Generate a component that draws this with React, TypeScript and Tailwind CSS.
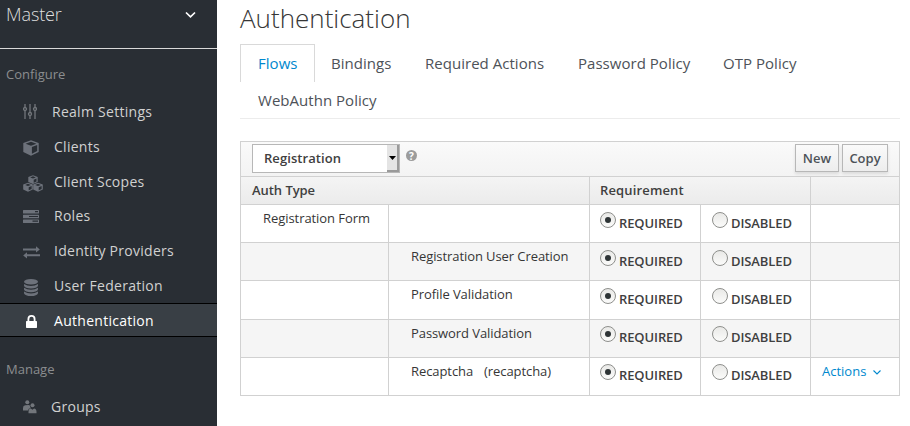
import React from "react";

type IconProps = { className?: string };

const SlidersIcon = ({ className }: IconProps) => (
  <svg className={className} width="14" height="15" viewBox="0 0 14 15" fill="none" stroke="currentColor" strokeWidth="1.3">
    <path d="M2 0v3M2 7v8M7 0v8M7 12v3M12 0v3M12 7v8" />
    <circle cx="2" cy="5" r="1.5" />
    <circle cx="7" cy="10" r="1.5" />
    <circle cx="12" cy="5" r="1.5" />
  </svg>
);

const CubeIcon = ({ className }: IconProps) => (
  <svg className={className} width="16" height="16" viewBox="0 0 16 16" fill="currentColor">
    <path fillRule="evenodd" d="M8 0.3L15.7 3.1V12L8 15.7L0.3 12V3.1ZM8 1.8L2.6 3.8L8 5.8L13.4 3.8ZM8.9 7.1V13.7L14.2 11.1V5.1Z" />
  </svg>
);

const CubesIcon = ({ className }: IconProps) => (
  <svg className={className} width="20" height="17" viewBox="0 0 20 17" fill="currentColor">
    <path fillRule="evenodd" d="M10 0.2L14.7 2V6.9L10 9.1L5.3 6.9V2ZM10 1.3L7.2 2.4L10 3.5L12.8 2.4ZM10.7 4.7V7.7L13.5 6.4V3.6Z" />
    <path fillRule="evenodd" d="M5 7.7L9.8 9.5V14.5L5 16.8L0.2 14.5V9.5ZM5 8.8L2.2 9.9L5 11L7.8 9.9ZM5.7 12.2V15.3L8.6 13.9V11.1Z" />
    <path fillRule="evenodd" d="M15 7.7L19.8 9.5V14.5L15 16.8L10.2 14.5V9.5ZM15 8.8L12.2 9.9L15 11L17.8 9.9ZM15.7 12.2V15.3L18.6 13.9V11.1Z" />
  </svg>
);

const TasksIcon = ({ className }: IconProps) => (
  <svg className={className} width="16" height="13" viewBox="0 0 16 13" fill="currentColor">
    <path fillRule="evenodd" d="M.5 0h15q.5 0 .5.5v2.500q0 .5-.5.5h-15Q0 3.500 0 3V.5Q0 0 .5 0ZM12 1v1.300h3V1ZM.5 4.800h15q.5 0 .5.5v2.500q0 .5-.5.5h-15Q0 8.300 0 7.800V5.300q0-.5.5-.5ZM6 5.900v1.200h9V5.900ZM.5 9.500h15q.5 0 .5.5v2.500q0 .5-.5.5h-15Q0 13 0 12.500V10q0-.5.5-.5ZM9.500 10.600v1.200H15v-1.200Z" />
  </svg>
);

const ExchangeIcon = ({ className }: IconProps) => (
  <svg className={className} width="17" height="13" viewBox="0 0 17 13" fill="currentColor">
    <path d="M0 2.400h13V.3L16.800 3.500L13 6.500V4.400H0ZM17 8.300H4V6.300L.2 9.500L4 12.600v-2.300h13Z" />
  </svg>
);

const DatabaseIcon = ({ className }: IconProps) => (
  <svg className={className} width="14" height="17" viewBox="0 0 14 17" fill="currentColor">
    <ellipse cx="7" cy="2.800" rx="7" ry="2.800" />
    <path d="M0 5q3 2 7 2t7-2v1.800Q13 9.500 7 9.500T0 6.800ZM0 8.700q3 2 7 2t7-2v1.800q-1 2.700-7 2.700T0 10.500ZM0 12.400q3 2 7 2t7-2v1.800Q13 17 7 17T0 14.200Z" />
  </svg>
);

const LockIcon = ({ className }: IconProps) => (
  <svg className={className} width="11" height="13" viewBox="0 0 11 13" fill="currentColor">
    <path fillRule="evenodd" d="M1.500 6V4a4 4 0 0 1 8 0v2h.8q.7 0 .7.700v5.600q0 .7-.7.700H.7q-.7 0-.7-.7V6.700Q0 6 .7 6ZM3.300 6h4.400V4a2.200 2.200 0 0 0-4.400 0Z" />
  </svg>
);

const GroupIcon = ({ className }: IconProps) => (
  <svg className={className} width="14" height="14" viewBox="0 0 14 14" fill="currentColor">
    <circle cx="4.300" cy="2.200" r="2" />
    <circle cx="9.500" cy="5.300" r="2" />
    <path d="M0 10.500V8q0-2.500 2.300-2.800L5.600 5q1 0 1.500.9Q7 7.300 7.800 8Q5.300 8.300 5 10.500ZM5.500 13.300v-1.500q0-3 2.300-3.300l1.700 1.200L11 8.500q2.500.3 2.500 3.300v1.500Z" />
  </svg>
);

type NavItem = {
  label: string;
  icon: (p: IconProps) => React.ReactElement;
  row: string;
  iconClass: string;
  textClass: string;
};

const configure: NavItem[] = [
  { label: "Realm Settings", icon: SlidersIcon, row: "h-[35px]", iconClass: "text-[#72767b] -mt-px", textClass: "pl-[52px]" },
  { label: "Clients", icon: CubeIcon, row: "h-[35px]", iconClass: "text-[#6d727b] mt-[3px]", textClass: "pl-[54px]" },
  { label: "Client Scopes", icon: CubesIcon, row: "h-[35px]", iconClass: "text-[#6d727b] mt-[3px]", textClass: "pl-[54px]" },
  { label: "Roles", icon: TasksIcon, row: "h-[34px]", iconClass: "text-[#6d727b] mt-[1px]", textClass: "pl-[54px]" },
  { label: "Identity Providers", icon: ExchangeIcon, row: "h-[35px]", iconClass: "text-[#6d727b] mt-[4px]", textClass: "pl-[54px]" },
  { label: "User Federation", icon: DatabaseIcon, row: "h-[35px]", iconClass: "text-[#6d727b] mt-[3px] ml-px", textClass: "pl-[54px]" },
  { label: "Authentication", icon: LockIcon, row: "h-[34px] border-y border-black bg-[#393f45]", iconClass: "text-white mt-[3px] ml-[3px]", textClass: "pl-[54px] pt-[2px]" },
];

const manage: NavItem[] = [
  { label: "Groups", icon: GroupIcon, row: "h-[35px]", iconClass: "text-[#72767b]", textClass: "pl-[51px]" },
];

function NavRow({ item }: { item: NavItem }) {
  const Icon = item.icon;
  return (
    <a className={`grid items-center ${item.row}`}>
      <span className="col-start-1 row-start-1 pl-[23px]">
        <Icon className={`block ${item.iconClass}`} />
      </span>
      <span
        className={`col-start-1 row-start-1 whitespace-nowrap text-[14px] leading-5 tracking-[0.28px] ${item.textClass} ${
          item.label === "Authentication" ? "text-white" : "text-[#d1d1d1]"
        }`}
      >
        {item.label}
      </span>
    </a>
  );
}

function Sidebar() {
  return (
    <aside className="h-full w-[217px] shrink-0 overflow-hidden bg-[#292e34]">
      <div className="flex h-[49px] justify-between border-b border-[#d9d9d9] pl-[6px] pr-[21px] pt-[2px] text-[#dedede]">
        <span className="text-[18px] font-light leading-6 tracking-[-0.1px]">Master</span>
        <svg className="mt-[9px]" width="11" height="8" viewBox="0 0 11 8" fill="none" stroke="white" strokeWidth="1.700">
          <path d="M1 1.500l4.500 4.300L10 1.500" />
        </svg>
      </div>
      <h2 className="h-[45px] pl-[6px] pt-[15px] text-[13px] leading-5 text-[#8b8d8f]">Configure</h2>
      <nav>
        {configure.map((i) => (
          <NavRow key={i.label} item={i} />
        ))}
      </nav>
      <h2 className="h-[52px] pl-[6px] pt-[22px] text-[13px] leading-5 text-[#8b8d8f]">Manage</h2>
      <nav>
        {manage.map((i) => (
          <NavRow key={i.label} item={i} />
        ))}
      </nav>
    </aside>
  );
}

const tabs = [
  { label: "Bindings", width: "w-[94px]" },
  { label: "Required Actions", width: "w-[153px]" },
  { label: "Password Policy", width: "w-[145px]" },
  { label: "OTP Policy", width: "w-[107px]" },
];

function Tabs() {
  return (
    <div className="h-[75px] w-[660px] border-b border-[#ececec] text-[15px] leading-5 tracking-[0.03px] text-[#4d5258]">
      <div className="flex h-[38px] whitespace-nowrap">
        <a className="w-[75px] border border-b-0 border-[#d9d9d9] pl-[17px] pt-[8px] text-[#0088ce]">Flows</a>
        {tabs.map((t) => (
          <a key={t.label} className={`pl-[16px] pt-[9px] ${t.width}`}>
            {t.label}
          </a>
        ))}
      </div>
      <a className="block pl-[18px] pt-[8px]">WebAuthn Policy</a>
    </div>
  );
}

function Radio({ label, checked = false }: { label: string; checked?: boolean }) {
  return (
    <label className="flex gap-[3px] whitespace-nowrap">
      <span className="flex size-[16px] shrink-0 items-center justify-center rounded-full border border-[#8e8f8c] bg-linear-to-b from-[#e9e9e7] to-[#fbfbfa]">
        {checked && <span className="size-[6px] rounded-full bg-[#2e3436]" />}
      </span>
      <span className="pt-px text-[13px] font-semibold leading-5 tracking-[-0.1px] text-[#404040]">{label}</span>
    </label>
  );
}

type Flow = { first?: string; second?: string; provider?: string; height: string; tone: string; radioPad: string };

const flows: Flow[] = [
  { first: "Registration Form", height: "h-[38px]", tone: "bg-white", radioPad: "pt-[7px]" },
  { second: "Registration User Creation", height: "h-[38px]", tone: "bg-[#f5f5f5]", radioPad: "pt-[7px]" },
  { second: "Profile Validation", height: "h-[39px]", tone: "bg-white", radioPad: "pt-[7px]" },
  { second: "Password Validation", height: "h-[38px]", tone: "bg-[#f5f5f5]", radioPad: "pt-[6px]" },
  { second: "Recaptcha", provider: "(recaptcha)", height: "h-[38px]", tone: "bg-white", radioPad: "pt-[6px]" },
];

function FlowTable() {
  return (
    <section className="w-[660px] border-l border-t border-[#d1d1d1] text-[13px] leading-5 text-[#363636]">
      <div className="flex h-[35px] border-b border-r border-[#d1d1d1] bg-linear-to-b from-[#fafafa] to-[#f3f3f3] pl-[11px] pr-[11px] pt-[2px]">
        <div className="flex h-[29px] w-[148px] justify-between border border-[#b7b7b7] bg-white">
          <span className="pl-[11px] pt-[3px] font-semibold tracking-[0.07px] text-[#404040]">Registration</span>
          <span className="flex w-[12px] items-center justify-center border-b-2 border-r-2 border-[#9a9a9a] bg-[#e4e4e4]">
            <svg width="7" height="4" viewBox="0 0 7 4">
              <path d="M0 0h7L3.500 4Z" fill="black" />
            </svg>
          </span>
        </div>
        <span className="ml-[6px] mt-[6px] flex size-[11px] items-center justify-center rounded-full bg-[#9c9c9c] text-[10px] font-bold leading-none text-white">
          ?
        </span>
        <div className="ml-auto flex gap-[3px] text-center font-semibold leading-[26px] text-[#4d5258]">
          <button className="h-[28px] w-[44px] border border-[#b7b7b7] bg-linear-to-b from-[#fafafa] to-[#ededed] shadow-[0_2px_3px_rgba(3,3,3,0.1)]">New</button>
          <button className="h-[28px] w-[46px] border border-[#b7b7b7] bg-linear-to-b from-[#fafafa] to-[#ededed] shadow-[0_2px_3px_rgba(3,3,3,0.1)]">Copy</button>
        </div>
      </div>
      <div className="grid h-[28px] grid-cols-[349px_221px_89px] bg-linear-to-b from-[#f4f4f4] to-[#ebebeb] font-semibold text-[#404040]">
        <div className="border-b border-r border-[#d1d1d1] pl-[11px] pt-[3px] tracking-[-0.05px]">Auth Type</div>
        <div className="border-b border-r border-[#d1d1d1] pl-[10px] pt-[3px] tracking-[0.15px]">Requirement</div>
        <div className="border-b border-r border-[#d1d1d1]" />
      </div>
      {flows.map((f, i) => (
        <div key={i} className={`grid grid-cols-[148px_201px_111px_110px_89px] whitespace-nowrap ${f.height} ${f.tone}`}>
          <div className="border-b border-r border-[#d1d1d1] pl-[22px] pt-[3px] tracking-[-0.06px]">{f.first}</div>
          <div className="flex gap-[11px] border-b border-r border-[#d1d1d1] pl-[22px] pt-[3px] tracking-[-0.08px]">
            <span>{f.second}</span>
            {f.provider && <span>{f.provider}</span>}
          </div>
          <div className={`border-b border-r border-[#d1d1d1] pl-[10px] ${f.radioPad}`}>
            <Radio label="REQUIRED" checked />
          </div>
          <div className={`border-b border-r border-[#d1d1d1] pl-[11px] ${f.radioPad}`}>
            <Radio label="DISABLED" />
          </div>
          <div className="border-b border-r border-[#d1d1d1]">
            {f.provider && (
              <a className="flex pl-[11px] pt-[3px] text-[#0088ce]">
                Actions
                <svg className="ml-[7px] mt-[9px]" width="8" height="5" viewBox="0 0 8 5" fill="none" stroke="currentColor" strokeWidth="1.100">
                  <path d="M.5.5L4 4L7.500.5" />
                </svg>
              </a>
            )}
          </div>
        </div>
      ))}
    </section>
  );
}

export default function App() {
  return (
    <div className="flex h-[426px] w-[910px] overflow-hidden bg-white font-['Open_Sans',sans-serif]">
      <Sidebar />
      <main className="flex flex-col pl-[23px]">
        <h1 className="h-[44px] pt-px text-[26px] font-light leading-[34px] text-[#363636]">Authentication</h1>
        <Tabs />
        <div className="pt-[22px]">
          <FlowTable />
        </div>
      </main>
    </div>
  );
}
